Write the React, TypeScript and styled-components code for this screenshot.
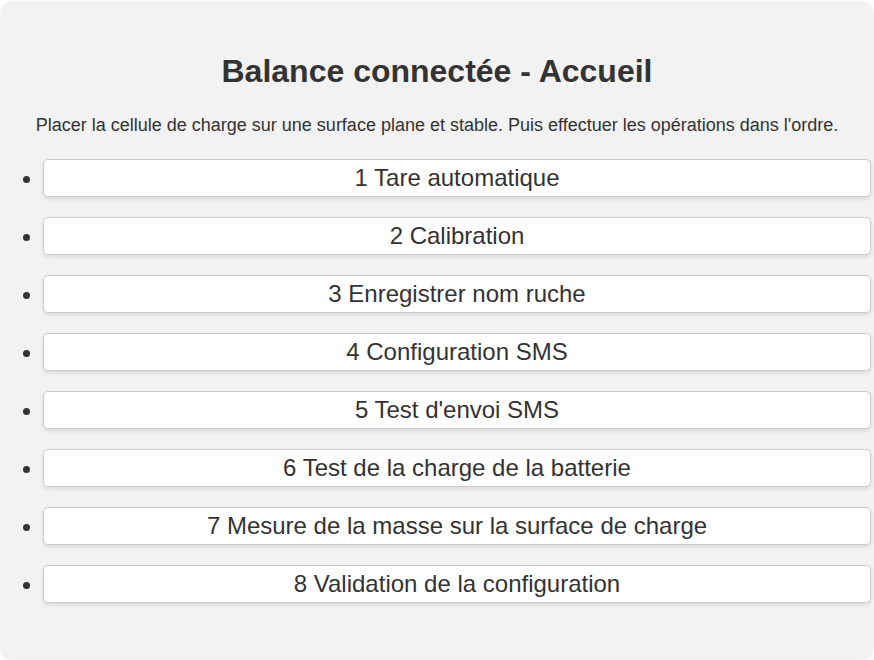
import React from "react";
import styled, { createGlobalStyle } from "styled-components";

const Global = createGlobalStyle`
  html, body { margin: 0; padding: 0; background: #ffffff; }
  body { font-family: "Liberation Sans", Arial, sans-serif; color: #333; }
  #root { padding: 3px 2px 2px 2px; }
`;

const Card = styled.div`
  background: #f2f2f2;
  border-radius: 10px;
  box-shadow: 0 0 4px rgba(0, 0, 0, 0.15);
  padding: 50px 0 36px 0;
  height: 656px;
  box-sizing: border-box;
`;

const Title = styled.h1`
  margin: 0;
  font-size: 32px;
  font-weight: bold;
  line-height: 37px;
  text-align: center;
  color: #333;
`;

const Intro = styled.p`
  margin: 25px 0 0 0;
  font-size: 18px;
  line-height: 21px;
  text-align: center;
  color: #333;
`;

const Steps = styled.ul`
  margin: 23px 0 0 0;
  padding: 0 1px 0 41px;
  list-style: disc;
`;

const Step = styled.li`
  margin: 0 0 20px 0;
  color: #333;
  font-size: 16px;
  &::marker { font-size: 22px; }
`;

const StepButton = styled.button`
  display: block;
  width: 100%;
  height: 38px;
  box-sizing: border-box;
  background: #ffffff;
  border: 1px solid #cccccc;
  border-radius: 5px;
  box-shadow: 0 2px 4px rgba(0, 0, 0, 0.1);
  font-family: "Liberation Sans", Arial, sans-serif;
  font-size: 24px;
  color: #333;
  cursor: pointer;
  padding: 0;
  vertical-align: middle;
`;

const steps = [
  "1 Tare automatique",
  "2 Calibration",
  "3 Enregistrer nom ruche",
  "4 Configuration SMS",
  "5 Test d'envoi SMS",
  "6 Test de la charge de la batterie",
  "7 Mesure de la masse sur la surface de charge",
  "8 Validation de la configuration",
];

export default function App() {
  return (
    <>
      <Global />
      <Card>
        <Title>Balance connectée - Accueil</Title>
        <Intro>
          Placer la cellule de charge sur une surface plane et stable. Puis effectuer les opérations dans l'ordre.
        </Intro>
        <Steps>
          {steps.map((s) => (
            <Step key={s}>
              <StepButton>{s}</StepButton>
            </Step>
          ))}
        </Steps>
      </Card>
    </>
  );
}
